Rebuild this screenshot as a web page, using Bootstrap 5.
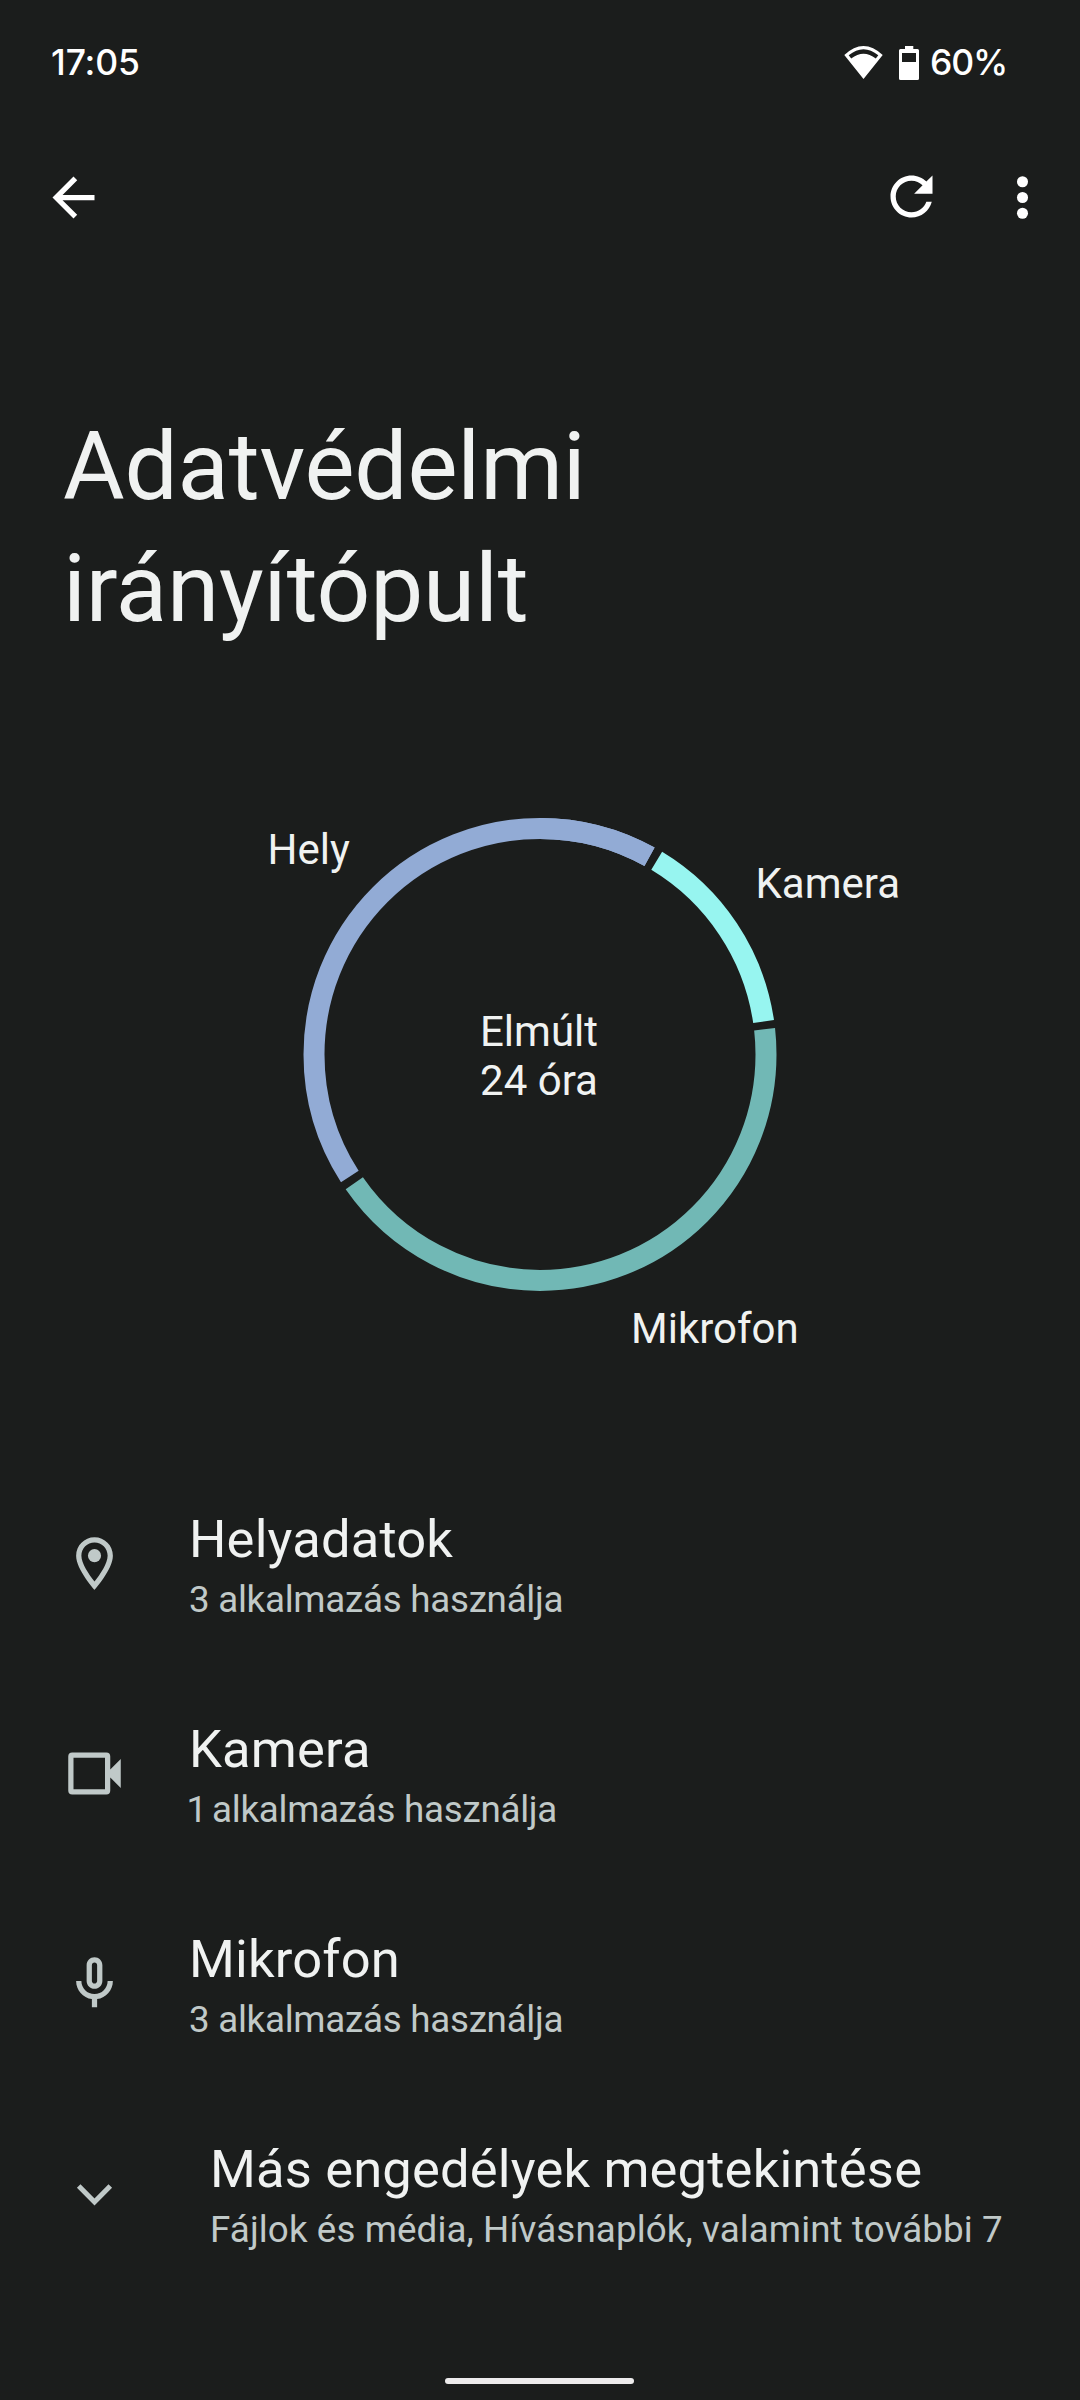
<!DOCTYPE html>
<html lang="hu">
<head>
<meta charset="utf-8">
<meta name="viewport" content="width=device-width, initial-scale=1">
<title>Adatvédelmi irányítópult</title>
<link href="https://cdn.jsdelivr.net/npm/bootstrap@5.3.0/dist/css/bootstrap.min.css" rel="stylesheet">
<style>
  body { background: #1b1d1c; color: #f0f2f1; font-family: Roboto, "Noto Sans", sans-serif; }
  .screen { width: 1080px; height: 2400px; }
  .status { height: 125px; padding: 0 73px 0 51px; color: #fff; font-family: Inter, Roboto, sans-serif; font-size: 35.5px; line-height: 42px; font-weight: 500; }
  .clock { letter-spacing: -.1px; }
  .charge { letter-spacing: -1.2px; margin-left: 11px; }
  .status svg + svg { margin-left: 16px; }
  .toolbar { height: 145px; padding: 0 26px 0 42px; color: #fff; }
  .toolbar .btn { line-height: 0; color: inherit; }
  .toolbar-end { gap: 48px; }
  .glyph { width: 63px; height: 63px; fill: currentColor; flex: none; }
  .headline { padding: 136px 63px 0; font-size: 94.5px; line-height: 122px; font-weight: 400; letter-spacing: -.2px; }
  .usage text { font-size: 42px; fill: #f0f2f1; }
  .usage circle { fill: none; stroke-width: 21; }
  .perm { height: 210px; padding: 0 63px; gap: 63px; background: transparent; color: #c0c9c8; border: 0; }
  .perm-text { padding-top: 3px; gap: 8px; white-space: nowrap; }
  .perm-title { font-size: 52.5px; line-height: 62px; color: #f0f2f1; letter-spacing: .17px; }
  .perm-sub { font-size: 36.75px; line-height: 43px; letter-spacing: -.27px; }
  .perm-sub.narrow-digit { text-indent: -2.5px; }
  .perm-sub.narrow-digit::first-letter { letter-spacing: -4px; }
  .perm-more { padding-left: 21px; }
  .perm-more .perm-sub { letter-spacing: .1px; }
  .home-pill { width: 189px; height: 6px; background: #edebec; margin: 80px 1px 0 0; }
</style>
</head>
<body>
<div class="screen d-flex flex-column overflow-hidden">
  <header class="status d-flex align-items-center justify-content-between">
    <span class="clock">17:05</span>
    <div class="d-flex align-items-center">
      <svg width="39" height="34" viewBox="844 45 39 34" fill="#fff"><path fill-rule="evenodd" d="M844.3 54Q863.5 36 882.7 54L863.5 78ZM848.7 54.3L851.2 57.4Q863.5 48 875.8 57.4L878.3 54.3Q863.5 42.3 848.7 54.3Z"/></svg>
      <svg width="20" height="34" viewBox="899 45 20 34" fill="#fff"><path fill-rule="evenodd" d="M905 45h8.3v3H917.500q1.500 0 1.500 1.500V77.500q0 1.500-1.500 1.500H900.500q-1.500 0-1.500-1.500V49.500q0-1.500 1.500-1.500H905ZM902 52V61H916V52Z"/></svg>
      <span class="charge">60%</span>
    </div>
  </header>

  <nav class="toolbar d-flex align-items-center justify-content-between">
    <button class="btn p-0 border-0" aria-label="Vissza"><svg class="glyph" viewBox="0 0 24 24"><path d="M20 11H7.830l5.590-5.590L12 4l-8 8 8 8 1.410-1.410L7.830 13H20v-2z"/></svg></button>
    <div class="toolbar-end d-flex">
      <button class="btn p-0 border-0" aria-label="Frissítés"><svg class="glyph" viewBox="0 0.4 24 24"><path d="M17.650 6.350C16.200 4.900 14.210 4 12 4c-4.420 0-7.990 3.580-7.990 8s3.570 8 7.990 8c3.730 0 6.840-2.550 7.730-6h-2.080c-.82 2.330-3.040 4-5.650 4-3.310 0-6-2.690-6-6s2.690-6 6-6c1.660 0 3.140.69 4.220 1.780L13 11h7V4l-2.350 2.350z"/></svg></button>
      <button class="btn p-0 border-0" aria-label="Továbbiak"><svg class="glyph" viewBox="0 0 24 24"><circle cx="12" cy="6" r="2.1"/><circle cx="12" cy="12" r="2.1"/><circle cx="12" cy="18" r="2.1"/></svg></button>
    </div>
  </nav>

  <h1 class="headline m-0">Adatvédelmi<br>irányítópult</h1>

  <svg class="usage d-block flex-shrink-0" width="1080" height="808" viewBox="0 650 1080 808">
    <g transform="rotate(-90 540 1054.400)">
      <circle cx="540" cy="1054.400" r="226" pathLength="360" stroke="#92abd5" stroke-dasharray="151.700 208.300" stroke-dashoffset="-237.300"/>
      <circle cx="540" cy="1054.400" r="226" pathLength="360" stroke="#92abd5" stroke-dasharray="29 331"/>
      <circle cx="540" cy="1054.400" r="226" pathLength="360" stroke="#97f5f0" stroke-dasharray="50.500 309.500" stroke-dashoffset="-31.100"/>
      <circle cx="540" cy="1054.400" r="226" pathLength="360" stroke="#71b8b5" stroke-dasharray="151.650 208.350" stroke-dashoffset="-83.600"/>
    </g>
    <text x="267.500" y="864">Hely</text>
    <text x="755.500" y="898">Kamera</text>
    <text x="631" y="1342.500">Mikrofon</text>
    <text x="539" y="1046" text-anchor="middle">Elmúlt</text>
    <text x="539" y="1095" text-anchor="middle">24 óra</text>
  </svg>

  <main class="list-group list-group-flush">
    <a class="perm list-group-item d-flex align-items-center">
      <svg class="glyph" viewBox="0 0 24 24"><path d="M12 2C8.130 2 5 5.130 5 9c0 5.250 7 13 7 13s7-7.750 7-13c0-3.870-3.130-7-7-7zM7 9c0-2.760 2.240-5 5-5s5 2.240 5 5c0 2.880-2.880 7.190-5 9.880C9.920 16.210 7 11.850 7 9z"/><circle cx="12" cy="9" r="2.500"/></svg>
      <div class="perm-text d-flex flex-column"><div class="perm-title">Helyadatok</div><div class="perm-sub">3 alkalmazás használja</div></div>
    </a>
    <a class="perm list-group-item d-flex align-items-center">
      <svg class="glyph" viewBox="0 0 24 24"><path fill-rule="evenodd" d="M3.500 4h13Q18 4 18 5.500v5l4-4v11l-4-4v5q0 1.500-1.500 1.500h-13Q2 20 2 18.500v-13Q2 4 3.500 4zM4 6v12h12V6z"/></svg>
      <div class="perm-text d-flex flex-column"><div class="perm-title">Kamera</div><div class="perm-sub narrow-digit">1 alkalmazás használja</div></div>
    </a>
    <a class="perm list-group-item d-flex align-items-center">
      <svg class="glyph" viewBox="0 0 24 24"><path d="M12 14c1.660 0 3-1.340 3-3V5c0-1.660-1.340-3-3-3S9 3.340 9 5v6c0 1.660 1.340 3 3 3zm-1-9c0-.55.45-1 1-1s1 .45 1 1v6c0 .55-.45 1-1 1s-1-.45-1-1V5zm6 6c0 2.760-2.240 5-5 5s-5-2.240-5-5H5c0 3.530 2.610 6.430 6 6.920V21h2v-3.080c3.390-.49 6-3.390 6-6.920h-2z"/></svg>
      <div class="perm-text d-flex flex-column"><div class="perm-title">Mikrofon</div><div class="perm-sub">3 alkalmazás használja</div></div>
    </a>
    <a class="perm list-group-item d-flex align-items-center">
      <svg class="glyph" viewBox="0 0 63 63"><path d="M15.700 24L31.500 40L47.300 24" fill="none" stroke="currentColor" stroke-width="5"/></svg>
      <div class="perm-text perm-more d-flex flex-column"><div class="perm-title">Más engedélyek megtekintése</div><div class="perm-sub">Fájlok és média, Hívásnaplók, valamint további 7</div></div>
    </a>
  </main>

  <footer class="d-flex justify-content-center">
    <div class="home-pill rounded-pill"></div>
  </footer>
</div>
<script src="https://cdn.jsdelivr.net/npm/bootstrap@5.3.0/dist/js/bootstrap.bundle.min.js"></script>
</body>
</html>
